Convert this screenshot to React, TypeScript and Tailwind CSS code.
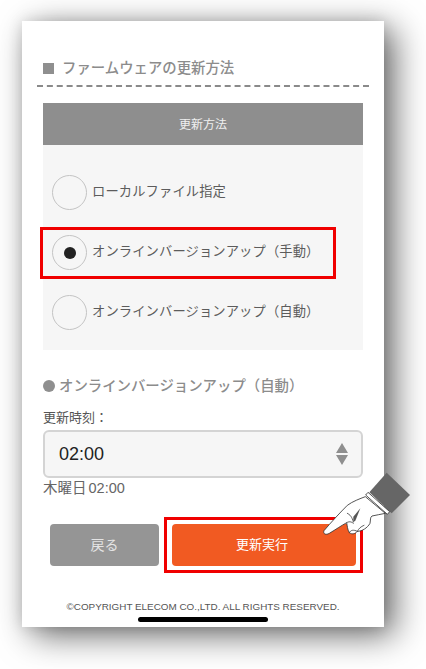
const font = { fontFamily: '"Liberation Sans", "Noto Sans CJK JP", sans-serif' };

const methods = [
  { label: "ローカルファイル指定", checked: false },
  { label: "オンラインバージョンアップ（手動）", checked: true },
  { label: "オンラインバージョンアップ（自動）", checked: false },
];

const PointingHand = () => (
  <svg
    className="absolute left-[310px] top-[460px]"
    width="110"
    height="90"
    viewBox="0 0 330 270"
  >
    <path d="M230 38 L300 105 L245 160 L178 97 Z" fill="#666666" />
    <path
      d="M166 110 C150 116 128 124 112 136 C92 156 62 188 42 212 C38 222 48 226 58 220 C78 208 92 198 110 188 C112 198 112 208 118 218 C126 224 136 222 142 214 C156 214 172 204 180 190 C182 180 180 172 186 168 C198 166 214 162 226 160 Z"
      fill="#ffffff"
      stroke="#333333"
      strokeWidth="2.5"
      strokeLinejoin="round"
    />
    <path
      d="M174 97 L239 155 L232 163 L167 105 Z"
      fill="#ffffff"
      stroke="#333333"
      strokeWidth="2.5"
    />
    <path d="M151 145 L136 182 L130 186 L130 170 Z" fill="#555555" />
    <path
      d="M112 160 C120 164 126 170 130 186 M110 188 C116 184 124 184 130 190 M118 218 C122 210 130 208 142 214 M142 214 C146 206 152 200 162 196"
      fill="none"
      stroke="#444444"
      strokeWidth="2.5"
      strokeLinecap="round"
    />
  </svg>
);

export default function App() {
  return (
    <div className="relative h-[669px] w-[426px] overflow-hidden bg-white" style={font}>
      <div className="ml-[22px] mt-[21px] flex h-[606px] w-[362px] flex-col bg-white shadow-[10px_8px_32px_rgba(0,0,0,0.6),0_0_14px_rgba(0,0,0,0.12)]">
        <div className="mx-[15px] mt-[37px] border-b-2 border-dashed border-[#8a8a8a] pb-[7px]">
          <h2 className="flex items-center gap-2 pl-[6px] text-[14.4px] leading-5 font-medium text-[#8c8c8c]">
            <span className="h-[11px] w-[11px] bg-[#8f8f8f]" />
            ファームウェアの更新方法
          </h2>
        </div>

        <div className="mx-[21px] mt-[16px]">
          <div className="flex h-[42px] items-center justify-center bg-[#8e8e8e] pt-[1px] text-[12px] text-[#f0f0f0]">
            更新方法
          </div>
          <div className="flex h-[205px] flex-col gap-[25px] bg-[#f6f6f6] pl-[9px] pt-[30px]">
            {methods.map((method) => (
              <label key={method.label} className="flex items-center gap-[5px]">
                <span className="flex h-[35px] w-[35px] items-center justify-center rounded-full border border-[#c4c4c4]">
                  {method.checked && <span className="h-[12px] w-[12px] rounded-full bg-[#222222]" />}
                </span>
                <span className="-mt-[2px] text-[13.3px] tracking-[0.1px] text-[#5c5c5c]">{method.label}</span>
              </label>
            ))}
          </div>

          <h3 className="mt-[26px] flex items-center gap-[4px] text-[14.4px] leading-5 font-medium text-[#8c8c8c]">
            <span className="h-[12px] w-[12px] rounded-full bg-[#8f8f8f]" />
            オンラインバージョンアップ（自動）
          </h3>
          <p className="mt-[14px] text-[13px] leading-4 text-[#555555]">更新時刻：</p>
          <div className="mt-[4px] flex h-[48px] items-center justify-between rounded-md border-2 border-[#d4d4d4] bg-[#f6f6f6] pl-[14px] pr-[13px]">
            <span className="text-[18px] text-[#222222]">02:00</span>
            <span className="flex flex-col gap-[2px]">
              <span className="h-0 w-0 border-x-[6px] border-b-[10px] border-x-transparent border-b-[#8f8f8f]" />
              <span className="h-0 w-0 border-x-[6px] border-t-[10px] border-x-transparent border-t-[#8f8f8f]" />
            </span>
          </div>
          <p className="flex items-baseline gap-[3px] text-[14.5px] leading-5 text-[#666666]">
            <span className="-mr-[1px]">木曜日</span>
            <span>02:00</span>
          </p>

          <div className="mt-[19px] flex items-center">
            <button className="ml-[7px] h-[42px] w-[109px] rounded-[4px] bg-[#959595] text-[14px] text-[#e4e4e4]">
              戻る
            </button>
            <div className="ml-[5px] border-[3px] border-[#f00000] bg-white pb-[4px] pl-[5px] pr-[4px] pt-[4px]">
              <button className="block h-[42px] w-[184px] rounded-[4px] bg-[#f15a22] pr-[4px] text-[13px] text-white">
                更新実行
              </button>
            </div>
          </div>
        </div>

        <p className="mt-[28px] text-center text-[9.9px] leading-3 text-[#555555]">
          ©COPYRIGHT ELECOM CO.,LTD. ALL RIGHTS RESERVED.
        </p>
        <div className="mx-auto mt-[4px] h-[5px] w-[130px] rounded-full bg-black" />
      </div>

      <div className="absolute left-[40px] top-[227px] h-[52px] w-[296px] border-[3px] border-[#f00000]" />
      <PointingHand />
    </div>
  );
}
